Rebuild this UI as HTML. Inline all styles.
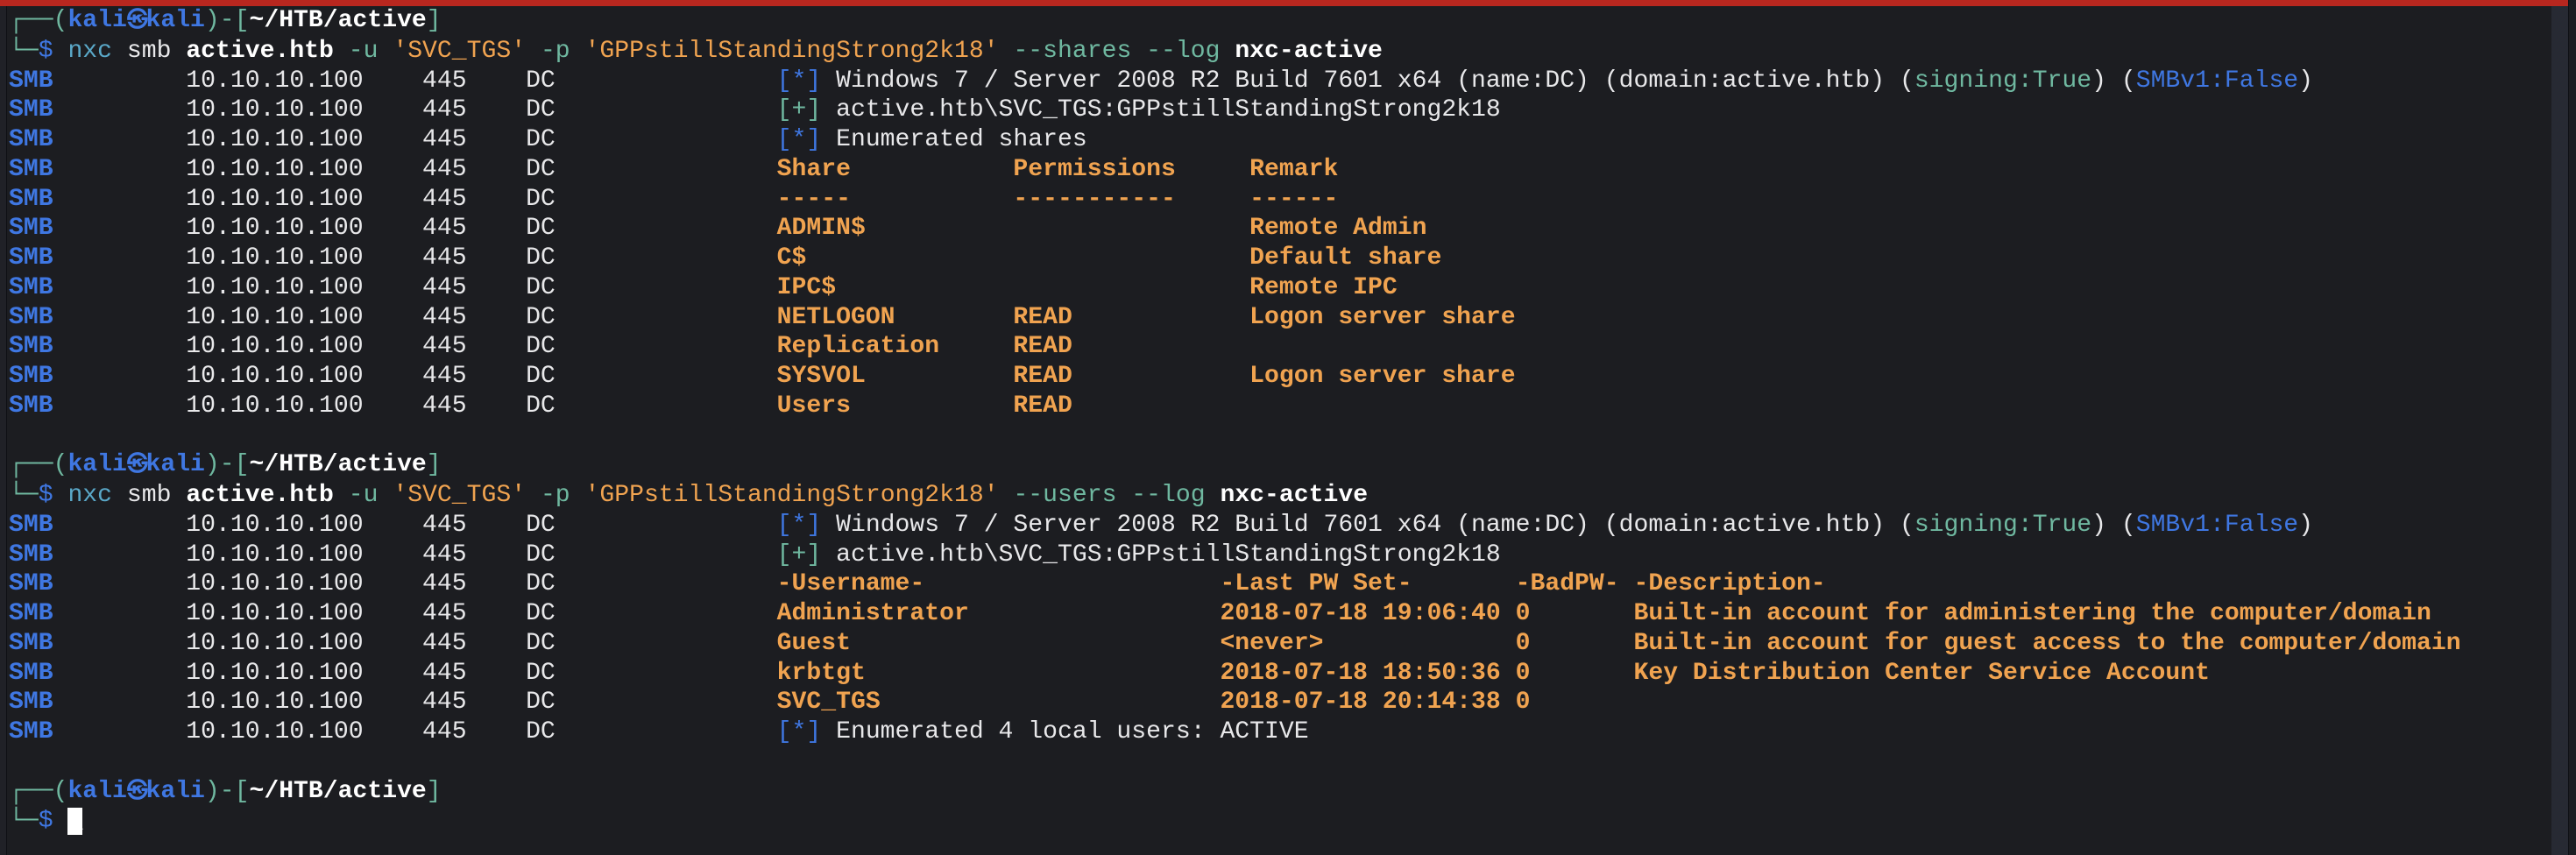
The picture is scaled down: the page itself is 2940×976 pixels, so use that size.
<!DOCTYPE html>
<html><head><meta charset="utf-8"><style>
html,body{margin:0;padding:0;width:2940px;height:976px;overflow:hidden;background:#1c1d21;}
#bar{position:absolute;left:0;top:0;width:2931px;height:7px;background:#b8271f;}
#lstrip{position:absolute;left:0;top:7px;width:7px;height:969px;background:#202127;border-right:1px solid #0f1014;}
#sb{position:absolute;left:2912px;top:7px;width:19px;height:969px;background:#272a33;}
#rline{position:absolute;left:2931px;top:0;width:1px;height:976px;background:#0e0f14;}
pre{position:absolute;left:10px;top:7px;margin:0;font-family:"Liberation Mono","DejaVu Sans Mono",monospace;font-size:28.1px;line-height:33.75px;color:#e8e8ea;}
.b{color:#3f77e2;font-weight:bold}
.bl{color:#3f77e2}
.g{color:#6fb8a0}
.o{color:#f0a350}
.ob{color:#f0a350;font-weight:bold}
.w{color:#ffffff;font-weight:bold}
.c{color:#5aa8c8}
.cur{background:#fff;color:#fff}
.k{display:inline-block;width:1.5ch;text-align:center;font-size:24px;overflow:visible}
</style></head><body>
<div id="bar"></div><div id="lstrip"></div><div id="sb"></div><div id="rline"></div>
<pre><span class="g">┌──(</span><span class="b">kali<span class="k">㉿</span>kali</span><span class="g">)-[</span><span class="w">~/HTB/active</span><span class="g">]</span>
<span class="g">└─</span><span class="bl">$</span> <span class="c">nxc</span> smb <span class="w">active.htb</span> <span class="g">-u</span> <span class="o">'SVC_TGS'</span> <span class="g">-p</span> <span class="o">'GPPstillStandingStrong2k18'</span> <span class="g">--shares --log</span> <span class="w">nxc-active</span>
<span class="b">SMB</span>         10.10.10.100    445    DC               <span class="bl">[*]</span> Windows 7 / Server 2008 R2 Build 7601 x64 (name:DC) (domain:active.htb) (<span class="g">signing:True</span>) (<span class="bl">SMBv1:False</span>)
<span class="b">SMB</span>         10.10.10.100    445    DC               <span class="g">[+]</span> active.htb\SVC_TGS:GPPstillStandingStrong2k18
<span class="b">SMB</span>         10.10.10.100    445    DC               <span class="bl">[*]</span> Enumerated shares
<span class="b">SMB</span>         10.10.10.100    445    DC               <span class="ob">Share           Permissions     Remark</span>
<span class="b">SMB</span>         10.10.10.100    445    DC               <span class="ob">-----           -----------     ------</span>
<span class="b">SMB</span>         10.10.10.100    445    DC               <span class="ob">ADMIN$                          Remote Admin</span>
<span class="b">SMB</span>         10.10.10.100    445    DC               <span class="ob">C$                              Default share</span>
<span class="b">SMB</span>         10.10.10.100    445    DC               <span class="ob">IPC$                            Remote IPC</span>
<span class="b">SMB</span>         10.10.10.100    445    DC               <span class="ob">NETLOGON        READ            Logon server share</span>
<span class="b">SMB</span>         10.10.10.100    445    DC               <span class="ob">Replication     READ</span>
<span class="b">SMB</span>         10.10.10.100    445    DC               <span class="ob">SYSVOL          READ            Logon server share</span>
<span class="b">SMB</span>         10.10.10.100    445    DC               <span class="ob">Users           READ</span>

<span class="g">┌──(</span><span class="b">kali<span class="k">㉿</span>kali</span><span class="g">)-[</span><span class="w">~/HTB/active</span><span class="g">]</span>
<span class="g">└─</span><span class="bl">$</span> <span class="c">nxc</span> smb <span class="w">active.htb</span> <span class="g">-u</span> <span class="o">'SVC_TGS'</span> <span class="g">-p</span> <span class="o">'GPPstillStandingStrong2k18'</span> <span class="g">--users --log</span> <span class="w">nxc-active</span>
<span class="b">SMB</span>         10.10.10.100    445    DC               <span class="bl">[*]</span> Windows 7 / Server 2008 R2 Build 7601 x64 (name:DC) (domain:active.htb) (<span class="g">signing:True</span>) (<span class="bl">SMBv1:False</span>)
<span class="b">SMB</span>         10.10.10.100    445    DC               <span class="g">[+]</span> active.htb\SVC_TGS:GPPstillStandingStrong2k18
<span class="b">SMB</span>         10.10.10.100    445    DC               <span class="ob">-Username-                    -Last PW Set-       -BadPW- -Description-</span>
<span class="b">SMB</span>         10.10.10.100    445    DC               <span class="ob">Administrator                 2018-07-18 19:06:40 0       Built-in account for administering the computer/domain</span>
<span class="b">SMB</span>         10.10.10.100    445    DC               <span class="ob">Guest                         &lt;never&gt;             0       Built-in account for guest access to the computer/domain</span>
<span class="b">SMB</span>         10.10.10.100    445    DC               <span class="ob">krbtgt                        2018-07-18 18:50:36 0       Key Distribution Center Service Account</span>
<span class="b">SMB</span>         10.10.10.100    445    DC               <span class="ob">SVC_TGS                       2018-07-18 20:14:38 0</span>
<span class="b">SMB</span>         10.10.10.100    445    DC               <span class="bl">[*]</span> Enumerated 4 local users: ACTIVE

<span class="g">┌──(</span><span class="b">kali<span class="k">㉿</span>kali</span><span class="g">)-[</span><span class="w">~/HTB/active</span><span class="g">]</span>
<span class="g">└─</span><span class="bl">$</span> <span class="cur">_</span></pre>
</body></html>
